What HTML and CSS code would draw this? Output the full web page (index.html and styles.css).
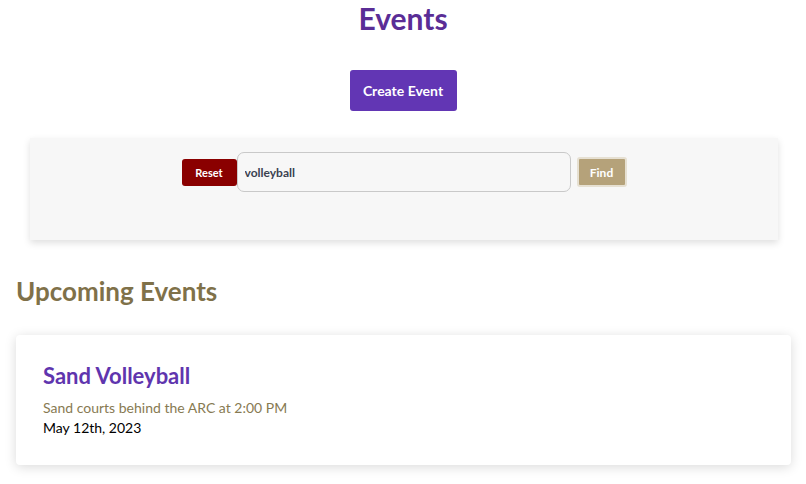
FILE: index.html
```html
<!DOCTYPE html>
<html>
<head>
<meta charset="utf-8">
<link rel="stylesheet" href="styles.css">
</head>
<body>
<main class="page">
  <h1 class="page-title">Events</h1>
  <div class="create-wrap">
    <button class="btn-create">Create Event</button>
  </div>
  <section class="search-panel">
    <form class="search-row">
      <button type="button" class="btn-reset">Reset</button>
      <input class="search-input" type="text" value="volleyball">
      <button type="button" class="btn-find">Find</button>
    </form>
  </section>
  <h2 class="section-title">Upcoming Events</h2>
  <article class="event-card">
    <h3 class="event-name">Sand Volleyball</h3>
    <p class="event-desc">Sand courts behind the ARC at 2:00 PM</p>
    <p class="event-date">May 12th, 2023</p>
  </article>
</main>
</body>
</html>
```

FILE: styles.css
```css
* { box-sizing: border-box; }
html, body { margin: 0; padding: 0; background: #fff; }
body { font-family: "Lato", "Noto Sans", sans-serif; color: #000; }

.page { display: flex; flex-direction: column; padding-bottom: 19px; }

.page-title {
  margin: 0;
  text-align: center;
  font-size: 30px;
  line-height: 36px;
  font-weight: 700;
  color: #5a2d96;
}

.create-wrap { display: flex; justify-content: center; margin-top: 34px; }
.btn-create {
  width: 107px;
  height: 41px;
  border: none;
  border-radius: 3px;
  background: #6236b4;
  color: #fff;
  font-family: "Lato", sans-serif;
  font-size: 14px;
  font-weight: 700;
  padding: 0;
}

.search-panel {
  margin: 27px 28px 0 30px;
  height: 102px;
  background: #f7f7f7;
  box-shadow: 0 3px 7px rgba(0,0,0,0.13);
  padding-top: 14px;
}
.search-row { display: flex; justify-content: center; align-items: center; margin: 0; }
.btn-reset {
  width: 55px;
  height: 27px;
  border: none;
  border-radius: 3px;
  background: #8a0000;
  color: #fff;
  font-family: "Lato", sans-serif;
  font-weight: 700;
  font-size: 11px;
  padding: 0;
}
.search-input {
  width: 334px;
  height: 40px;
  border: 1px solid #c9c9c9;
  border-radius: 7px;
  background: #f7f7f7;
  padding: 0 7px;
  font-family: "Lato", sans-serif;
  font-weight: 700;
  font-size: 12px;
  color: #3a4250;
  outline: none;
}
.btn-find {
  margin-left: 6px;
  width: 50px;
  height: 30px;
  border: 2px solid #e6e0d2;
  border-radius: 3px;
  background: #b5a27a;
  color: #fff;
  font-family: "Lato", sans-serif;
  font-weight: 700;
  font-size: 12px;
  padding: 0;
}

.section-title {
  margin: 34px 0 0 16px;
  font-size: 26px;
  line-height: 34px;
  font-weight: 700;
  color: #7f7149;
}

.event-card {
  margin: 27px 15px 0 16px;
  height: 130px;
  background: #fff;
  border-radius: 4px;
  box-shadow: 0 2px 12px rgba(0,0,0,0.15);
  padding: 27px 27px;
}
.event-name {
  margin: 0;
  font-size: 22px;
  line-height: 28px;
  font-weight: 700;
  color: #5f35ae;
}
.event-desc {
  margin: 8px 0 0;
  font-size: 14px;
  line-height: 20px;
  color: #877a52;
}
.event-date {
  margin: 0;
  font-size: 14px;
  line-height: 20px;
  font-weight: 400;
  color: #000;
}
```
